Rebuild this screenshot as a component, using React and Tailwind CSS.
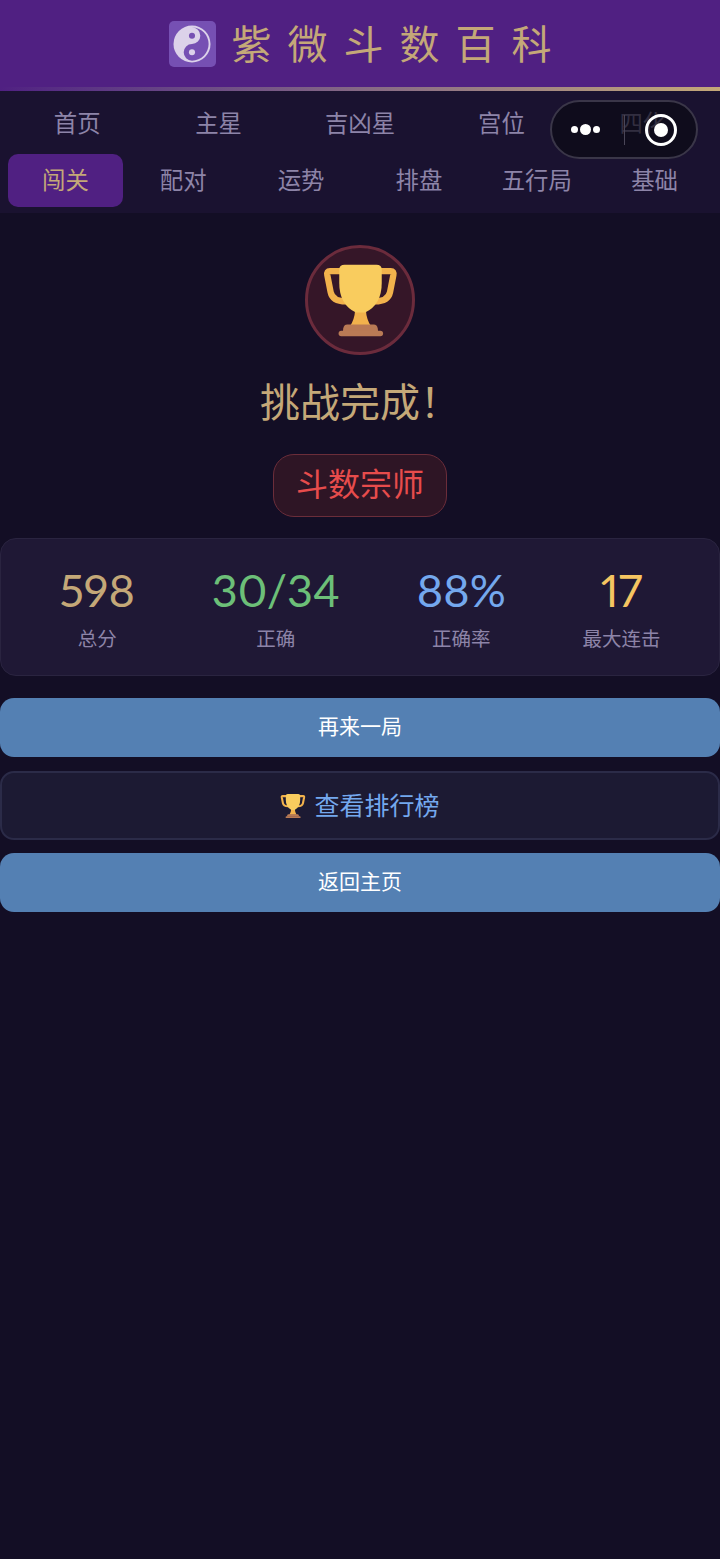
const cjk = "font-['Lato','Noto_Sans_CJK_SC',sans-serif]";

function Trophy({ className }) {
  return (
    <svg viewBox="20 25 232 225" className={className}>
      <path d="M75 49H44Q34 49 36 61L46 112Q52 140 92 140" fill="none" stroke="#f2b24c" strokeWidth="19" strokeLinecap="round" />
      <path d="M196 49H227Q237 49 235 61L225 112Q219 140 179 140" fill="none" stroke="#f2b24c" strokeWidth="19" strokeLinecap="round" />
      <path d="M120 165H152Q154 195 168 215H104Q118 195 120 165z" fill="#f2b24c" />
      <path d="M72 45Q72 30 88 30H184Q200 30 200 45V85Q200 150 150 174H122Q72 150 72 85z" fill="#f9cc5e" />
      <path d="M96 210H176Q186 210 188 222L189 232H83L84 222Q86 210 96 210z" fill="#b97a55" />
      <rect x="70" y="229" width="134" height="16" rx="8" fill="#b97a55" />
    </svg>
  );
}

function YinYang() {
  return (
    <svg viewBox="0 0 40 40" className="h-[38px] w-[38px]">
      <circle cx="20" cy="20" r="19.500" fill="#dcd2ea" />
      <path d="M20 2.500a17.500 17.500 0 0 1 0 35a8.750 8.750 0 0 1 0-17.500a8.750 8.750 0 0 0 0-17.500z" fill="#7650b3" />
      <circle cx="20" cy="11.250" r="3.200" fill="#7650b3" />
      <circle cx="20" cy="28.750" r="3.200" fill="#dcd2ea" />
    </svg>
  );
}

function NavRow({ items, cols }) {
  return (
    <div className={`grid gap-[3px] ${cols}`}>
      {items.map((item) => (
        <div
          key={item}
          className={`flex h-[53px] items-center justify-center rounded-[10px] text-[23.4px] ${
            item === "闯关" ? "bg-[#502082] text-[#c4a878]" : "text-[#8d84a8]"
          }`}
        >
          {item}
        </div>
      ))}
    </div>
  );
}

function Stat({ value, label, color }) {
  return (
    <div className="flex flex-col items-center">
      <div className={`text-[45px] font-normal leading-[56px] proportional-nums ${color}`}>{value}</div>
      <div className="mt-[7px] text-[19.500px] leading-[28px] text-[#8d84a8]">{label}</div>
    </div>
  );
}

export default function App() {
  return (
    <div className={`relative min-h-screen bg-[#130e25] ${cjk}`}>
      <header className="flex h-[87px] items-center justify-center gap-[16px] bg-[#502082]">
        <div className="flex h-[46px] w-[47px] items-center justify-center rounded-[5px] bg-[#7650b3]">
          <YinYang />
        </div>
        <h1 className="-mr-[16px] text-[40px] leading-none tracking-[16px] text-[#c4a878]">紫微斗数百科</h1>
      </header>
      <div className="h-1 bg-gradient-to-r from-[#502082] to-[#c4a878]" />

      <nav className="flex flex-col gap-1 bg-[#1a1230] px-2 py-1.5">
        <NavRow items={["首页", "主星", "吉凶星", "宫位", "四化"]} cols="grid-cols-5" />
        <NavRow items={["闯关", "配对", "运势", "排盘", "五行局", "基础"]} cols="grid-cols-6" />
      </nav>

      {/* capsule sits over the nav */}
      <div className="absolute left-[550px] top-[100px] flex h-[59px] w-[148px] items-center rounded-full border-2 border-[#3a3648] bg-[#0c0a14]/70">
        <div className="ml-[19px] flex items-center gap-[2px]">
          <span className="h-[7px] w-[7px] rounded-full bg-white" />
          <span className="h-[11px] w-[11px] rounded-full bg-white" />
          <span className="h-[7px] w-[7px] rounded-full bg-white" />
        </div>
        <span className="ml-[24px] h-[30px] w-px bg-[#4a4658]" />
        <div className="ml-[20px] flex h-[32px] w-[32px] items-center justify-center rounded-full border-[3px] border-white">
          <span className="h-[14px] w-[14px] rounded-full bg-white" />
        </div>
      </div>

      <main className="flex flex-col items-center pt-[32px]">
        <div className="flex h-[110px] w-[110px] items-center justify-center rounded-full border-[3px] border-[#6b2b3c] bg-[#351628]">
          <Trophy className="h-[75px] w-[77px]" />
        </div>
        <h2 className="mt-[19px] text-[40px] leading-[56px] text-[#c4a878]">挑战完成！</h2>
        <div className="mt-[24px] flex h-[63px] w-[174px] items-center justify-center rounded-[21px] border border-[#6b2d3a] bg-[#2e1525] pb-1 text-[32px] text-[#e74c4c]">
          斗数宗师
        </div>

        <div className="mt-[21px] flex h-[138px] w-full items-center justify-around rounded-[16px] border border-[#2a2440] bg-[#1f1835] px-5">
          <Stat value="598" label="总分" color="text-[#c4a878]" />
          <Stat value="30/34" label="正确" color="text-[#6cbf78]" />
          <Stat value="88%" label="正确率" color="text-[#74a8ee]" />
          <Stat value="17" label="最大连击" color="text-[#f5c561]" />
        </div>

        <button className="mt-[22px] h-[59px] w-full rounded-[14px] bg-[#5480b3] pb-1 text-[21px] text-white">再来一局</button>
        <button className="mt-[14px] flex h-[69px] w-full items-center justify-center gap-[8px] rounded-[14px] border-2 border-[#2b2b48] bg-[#1c1a33] text-[25px] text-[#74a8ee]">
          <Trophy className="h-[26px] w-[26px]" />
          查看排行榜
        </button>
        <button className="mt-[13px] h-[59px] w-full rounded-[14px] bg-[#5480b3] pb-1 text-[21px] text-white">返回主页</button>
      </main>
    </div>
  );
}
